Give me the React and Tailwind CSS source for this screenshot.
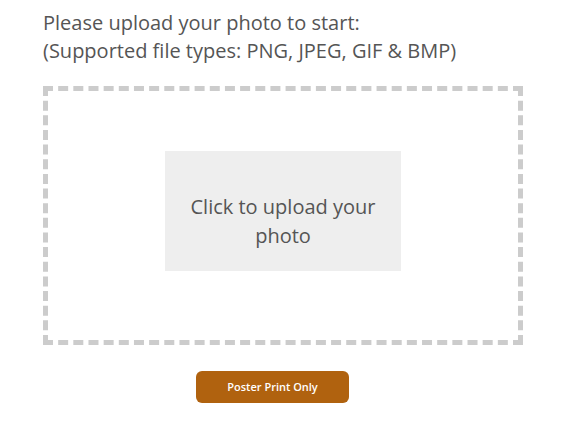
export default function App() {
  return (
    <div className="min-h-[427px] bg-white px-[43px] pt-[9px] font-['Open_Sans',sans-serif] text-[#555]">
      <p className="text-[20px] leading-[28px]">
        Please upload your photo to start:
        <br />
        (Supported file types: PNG, JPEG, GIF &amp; BMP)
      </p>
      <div className="mt-[21px] flex h-[259px] w-[480px] items-center justify-center border-[5px] border-dashed border-[#cccccc]">
        <button className="mb-[9px] flex h-[120px] w-[236px] items-center justify-center bg-[#eeeeee] px-5 pt-[20px] text-center text-[20px] leading-[29px] text-[#555]">
          Click to upload your photo
        </button>
      </div>
      <div className="mt-[26px] flex justify-center pr-[25px]">
        <button className="h-[32px] w-[153px] rounded-[6px] bg-[#b0620f] text-[11px] font-semibold text-white">
          Poster Print Only
        </button>
      </div>
    </div>
  );
}
